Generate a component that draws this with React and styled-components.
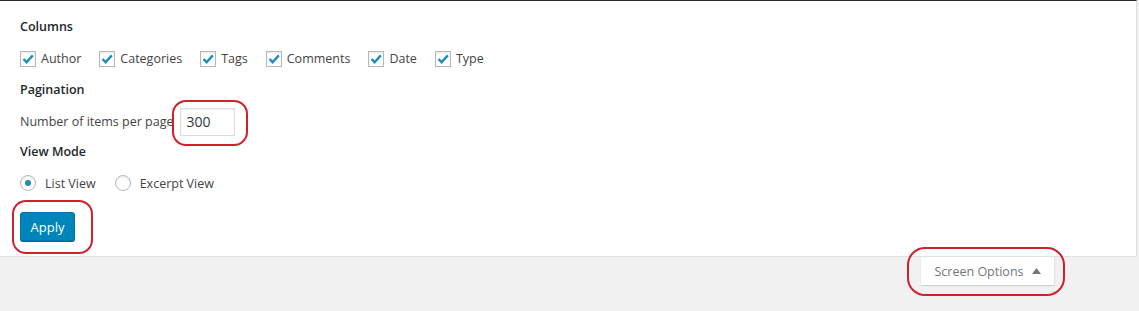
import React from "react";
import styled, { createGlobalStyle } from "styled-components";

const GlobalStyle = createGlobalStyle`
  body {
    margin: 0;
    background: #f1f1f1;
    font-family: "Open Sans", "Noto Sans", sans-serif;
    font-size: 12.5px;
    color: #444;
  }
`;

const Page = styled.div`
  position: relative;
  width: 1139px;
  height: 311px;
  overflow: hidden;
`;

const Panel = styled.div`
  height: 244px;
  width: 1116px;
  background: #fff;
  border-top: 1px solid #23282d;
  border-right: 1px solid #ddd;
  border-bottom: 1px solid #e1e1e1;
  padding: 11px 0 0 20px;
  display: flex;
  flex-direction: column;
`;

const Heading = styled.div`
  font-weight: 600;
  color: #23282d;
  line-height: 30px;
  height: ${(p) => p.h || 30}px;
`;

const OptionRow = styled.div`
  display: flex;
  align-items: center;
  height: ${(p) => p.h || 32}px;
  gap: ${(p) => p.gap || 18}px;
`;

const Option = styled.label`
  display: flex;
  align-items: center;
  gap: ${(p) => (p.radio ? 9 : 5)}px;
  color: #444;
`;

const Box = styled.span`
  width: 16px;
  height: 16px;
  box-sizing: border-box;
  border: 1px solid #b4b9be;
  box-shadow: inset 0 1px 2px rgba(0, 0, 0, 0.1);
  background: #fff;
  display: flex;
  align-items: center;
  justify-content: center;
`;

const Radio = styled(Box)`
  border-radius: 50%;
  &::after {
    content: "";
    display: ${(p) => (p.checked ? "block" : "none")};
    width: 6px;
    height: 6px;
    border-radius: 50%;
    background: #1e8cbe;
  }
`;

const NumberRow = styled.div`
  display: flex;
  align-items: center;
  height: 31px;
  gap: 7px;
`;

const NumberInput = styled.div`
  width: 55px;
  height: 28px;
  box-sizing: border-box;
  border: 1px solid #ddd;
  box-shadow: inset 0 1px 2px rgba(0, 0, 0, 0.07);
  padding-left: 5px;
  display: flex;
  align-items: center;
  color: #32373c;
  font-size: 14px;
`;

const ApplyButton = styled.button`
  margin-top: 13px;
  align-self: flex-start;
  width: 55px;
  height: 29px;
  background: #0085ba;
  border: 1px solid #0073aa;
  border-radius: 3px;
  box-shadow: 0 1px 0 #006799;
  color: #fff;
  font-family: inherit;
  font-size: 13px;
  padding: 0;
`;

const Tab = styled.div`
  position: absolute;
  left: 921px;
  top: 257px;
  width: 134px;
  height: 28px;
  box-sizing: border-box;
  background: #fff;
  box-shadow: 0 1px 1px rgba(0, 0, 0, 0.12);
  border-right: 1px solid #e5e5e5;
  display: flex;
  align-items: center;
  justify-content: center;
  gap: 8px;
  color: #72777c;
`;

const Mark = styled.div`
  position: absolute;
  border: 2px solid #d0202e;
  border-radius: 14px;
  pointer-events: none;
`;

const Check = () => (
  <Box>
    <svg width="14" height="14" viewBox="0 0 14 14">
      <path d="M2.5 7 L5.6 10.2 L11.8 3.4" fill="none" stroke="#1e8cbe" strokeWidth="2.4" />
    </svg>
  </Box>
);

const columns = ["Author", "Categories", "Tags", "Comments", "Date", "Type"];

export default function App() {
  return (
    <Page>
      <GlobalStyle />
      <Panel>
        <Heading>Columns</Heading>
        <OptionRow h={33}>
          {columns.map((c) => (
            <Option key={c}>
              <Check />
              {c}
            </Option>
          ))}
        </OptionRow>
        <Heading h={31}>Pagination</Heading>
        <NumberRow>
          Number of items per page
          <NumberInput>300</NumberInput>
        </NumberRow>
        <Heading>View Mode</Heading>
        <OptionRow gap={19}>
          <Option radio>
            <Radio checked />
            List View
          </Option>
          <Option radio>
            <Radio />
            Excerpt View
          </Option>
        </OptionRow>
        <ApplyButton>Apply</ApplyButton>
      </Panel>
      <Tab>
        Screen Options
        <svg width="9" height="6" viewBox="0 0 9 6">
          <path d="M0 6 L4.5 0 L9 6 Z" fill="#72777c" />
        </svg>
      </Tab>
      <Mark style={{ left: 172, top: 100, width: 72, height: 42 }} />
      <Mark style={{ left: 12, top: 200, width: 77, height: 50 }} />
      <Mark style={{ left: 907, top: 247, width: 154, height: 45, borderRadius: 18 }} />
    </Page>
  );
}
